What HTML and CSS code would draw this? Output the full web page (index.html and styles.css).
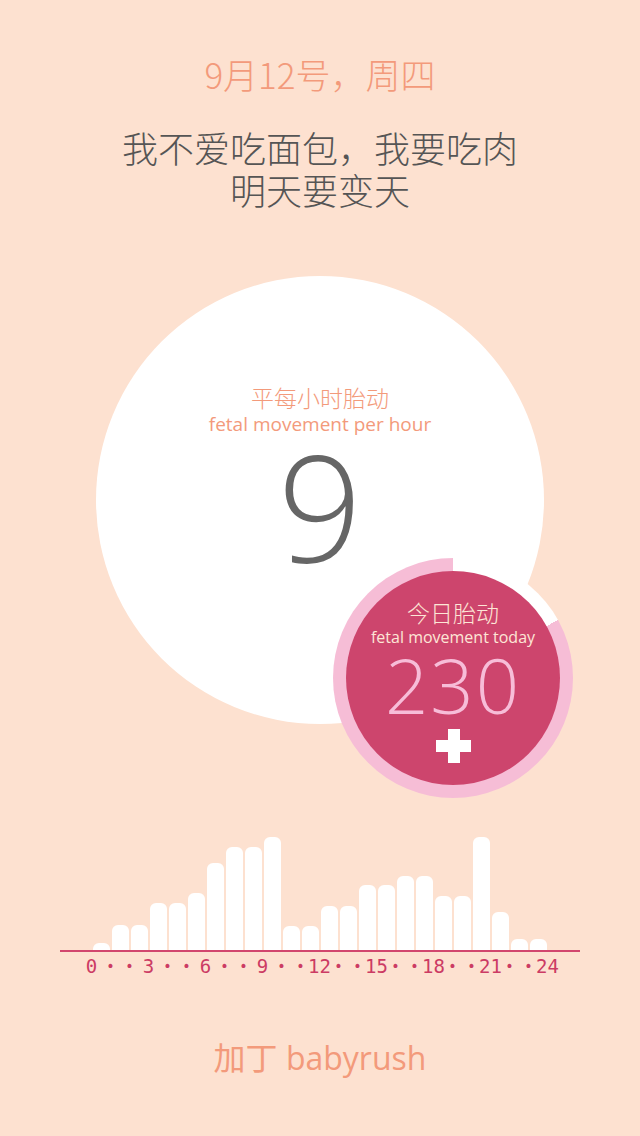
FILE: index.html
```html
<!DOCTYPE html>
<html lang="zh">
<head>
<meta charset="utf-8">
<title>babyrush</title>
<link rel="stylesheet" href="styles.css">
</head>
<body>
<main class="page">
  <header class="header">
    <div class="date">9月12号，周四</div>
    <div class="quote">
      <div class="quote-line">我不爱吃面包，我要吃肉</div>
      <div class="quote-line">明天要变天</div>
    </div>
  </header>

  <section class="stage">
    <div class="hour-circle">
      <div class="hour-title">平每小时胎动</div>
      <div class="hour-sub">fetal movement per hour</div>
      <div class="hour-num">9</div>
    </div>
    <div class="today-ring">
      <div class="today-circle">
        <div class="today-title">今日胎动</div>
        <div class="today-sub">fetal movement today</div>
        <div class="today-num">230</div>
        <div class="plus"><span class="plus-h"></span><span class="plus-v"></span></div>
      </div>
    </div>
  </section>

  <section class="chart">
    <div class="bars">
      <div class="bar" style="height:7px"></div>
      <div class="bar" style="height:25px"></div>
      <div class="bar" style="height:25px"></div>
      <div class="bar" style="height:47px"></div>
      <div class="bar" style="height:47px"></div>
      <div class="bar" style="height:57px"></div>
      <div class="bar" style="height:87px"></div>
      <div class="bar" style="height:103px"></div>
      <div class="bar" style="height:103px"></div>
      <div class="bar" style="height:113px"></div>
      <div class="bar" style="height:24px"></div>
      <div class="bar" style="height:24px"></div>
      <div class="bar" style="height:44px"></div>
      <div class="bar" style="height:44px"></div>
      <div class="bar" style="height:65px"></div>
      <div class="bar" style="height:65px"></div>
      <div class="bar" style="height:74px"></div>
      <div class="bar" style="height:74px"></div>
      <div class="bar" style="height:54px"></div>
      <div class="bar" style="height:54px"></div>
      <div class="bar" style="height:113px"></div>
      <div class="bar" style="height:38px"></div>
      <div class="bar" style="height:11px"></div>
      <div class="bar" style="height:11px"></div>
    </div>
    <div class="axis"></div>
    <div class="labels">
      <span class="lbl">0</span><span class="lbl dot">•</span><span class="lbl dot">•</span>
      <span class="lbl">3</span><span class="lbl dot">•</span><span class="lbl dot">•</span>
      <span class="lbl">6</span><span class="lbl dot">•</span><span class="lbl dot">•</span>
      <span class="lbl">9</span><span class="lbl dot">•</span><span class="lbl dot">•</span>
      <span class="lbl">12</span><span class="lbl dot">•</span><span class="lbl dot">•</span>
      <span class="lbl">15</span><span class="lbl dot">•</span><span class="lbl dot">•</span>
      <span class="lbl">18</span><span class="lbl dot">•</span><span class="lbl dot">•</span>
      <span class="lbl">21</span><span class="lbl dot">•</span><span class="lbl dot">•</span>
      <span class="lbl">24</span>
    </div>
  </section>

  <footer class="footer">加丁 babyrush</footer>
</main>
</body>
</html>
```
FILE: styles.css
```css
html, body {
  margin: 0;
  padding: 0;
}
body {
  background: #fde1d0;
  width: 640px;
  height: 1136px;
  overflow: hidden;
  font-family: "Open Sans", "Noto Sans CJK SC", sans-serif;
}
.page {
  display: flex;
  flex-direction: column;
  align-items: center;
}
.header {
  padding-top: 54px;
  text-align: center;
  font-family: "Noto Sans CJK SC", sans-serif;
  font-weight: 300;
}
.date {
  color: #f39a7b;
  font-size: 35px;
  line-height: 40px;
}
.quote {
  margin-top: 32px;
  color: #555555;
  font-size: 36px;
  line-height: 42px;
}
.quote-line {
  height: 42px;
}
.stage {
  position: relative;
  margin-top: 66px;
  width: 640px;
  height: 530px;
}
.hour-circle {
  margin-left: 96px;
  width: 448px;
  height: 448px;
  border-radius: 50%;
  background: #ffffff;
  display: flex;
  flex-direction: column;
  align-items: center;
}
.hour-title {
  margin-top: 108px;
  color: #f39a7b;
  font-family: "Noto Sans CJK SC", sans-serif;
  font-weight: 300;
  font-size: 23px;
  line-height: 27px;
}
.hour-sub {
  color: #f39a7b;
  font-size: 19px;
  line-height: 26px;
}
.hour-num {
  margin-top: -12px;
  color: #666666;
  font-size: 148px;
  font-weight: 350;
  line-height: 160px;
}
.today-ring {
  position: absolute;
  left: 333px;
  top: 282px;
  width: 240px;
  height: 240px;
  padding: 13px;
  box-sizing: border-box;
  border-radius: 50%;
  background: conic-gradient(#ffffff 0deg 61deg, #f6bdd6 61deg 360deg);
}
.today-circle {
  width: 214px;
  height: 214px;
  border-radius: 50%;
  background: #cd456d;
  display: flex;
  flex-direction: column;
  align-items: center;
}
.today-title {
  margin-top: 27px;
  color: #fde6d6;
  font-family: "Noto Sans CJK SC", sans-serif;
  font-weight: 300;
  font-size: 23px;
  line-height: 28px;
}
.today-sub {
  color: #fde6d6;
  font-size: 16px;
  line-height: 22px;
}
.today-num {
  margin-top: -3px;
  color: #f7bdd8;
  font-size: 76px;
  font-weight: 300;
  line-height: 80px;
  letter-spacing: 2px;
}
.plus {
  position: relative;
  margin-top: 4px;
  width: 35px;
  height: 34px;
}
.plus-h, .plus-v {
  position: absolute;
  background: #ffffff;
}
.plus-h {
  left: 0;
  top: 11px;
  width: 35px;
  height: 12px;
}
.plus-v {
  left: 12px;
  top: 0;
  width: 12px;
  height: 34px;
}
.chart {
  width: 520px;
  display: flex;
  flex-direction: column;
}
.bars {
  height: 144px;
  display: flex;
  align-items: flex-end;
  gap: 2px;
  padding-left: 33px;
}
.bar {
  width: 17px;
  background: #ffffff;
  border-radius: 6px 6px 0 0;
}
.axis {
  height: 2px;
  background: #d2466e;
}
.labels {
  display: flex;
  margin-top: 4px;
  padding-left: 22px;
  font-family: "DejaVu Sans Mono", monospace;
  color: #cc3b64;
  font-size: 19px;
  line-height: 20px;
}
.lbl {
  width: 19px;
  display: flex;
  justify-content: center;
  white-space: nowrap;
}
.dot {
  font-size: 14px;
}
.footer {
  margin-top: 62px;
  color: #f39a7b;
  font-family: "Open Sans", "Noto Sans CJK SC", sans-serif;
  font-weight: 400;
  font-size: 32px;
  line-height: 40px;
}
```
